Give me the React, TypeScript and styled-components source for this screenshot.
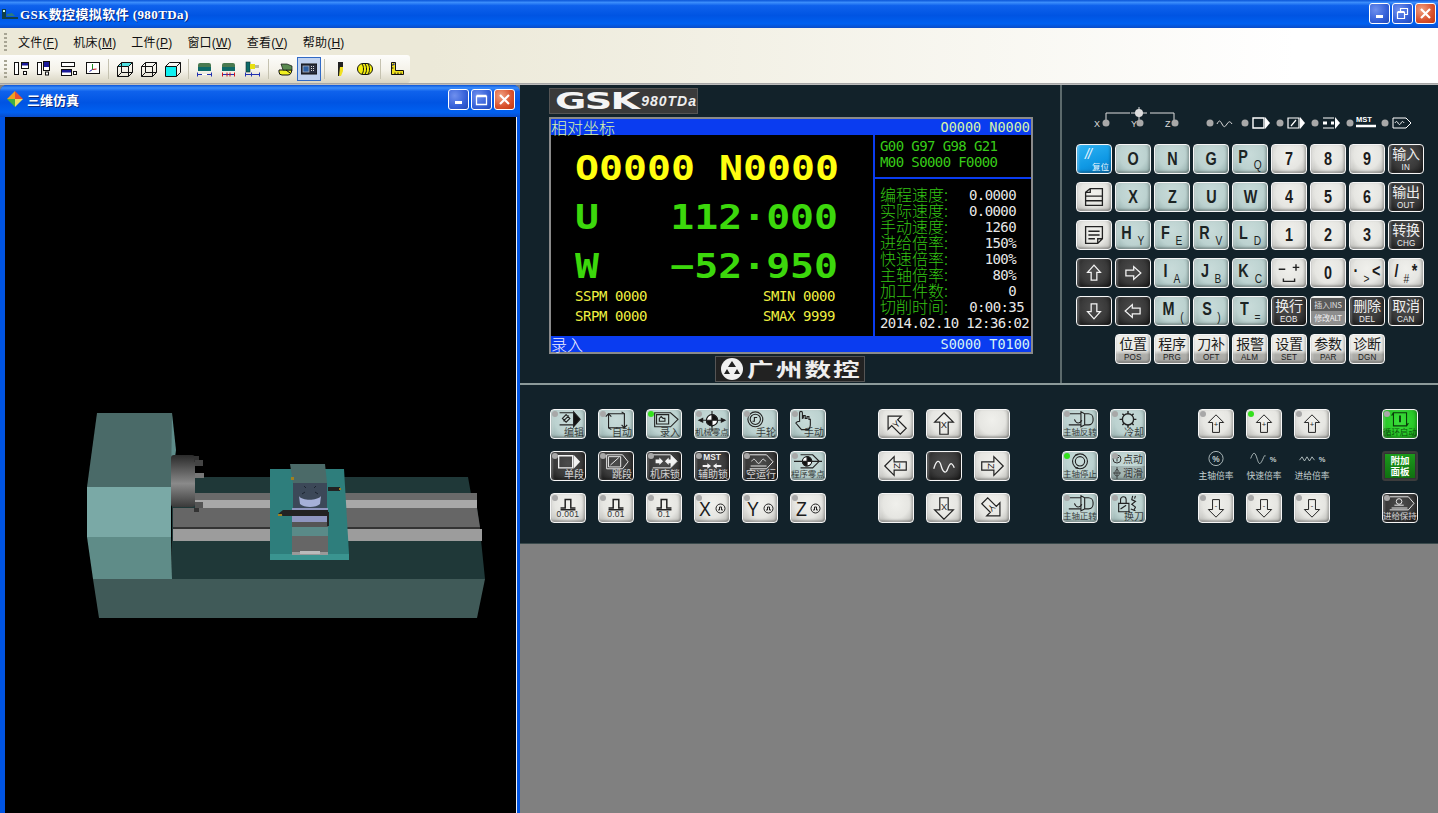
import React from 'react';
import styled, { createGlobalStyle, css } from 'styled-components';

const CJK = '"Liberation Sans", "Noto Sans CJK SC", sans-serif';
const MONO = '"DejaVu Sans Mono", "Noto Sans CJK SC", monospace';

const Global = createGlobalStyle`
  html, body { margin: 0; padding: 0; background: #808080; overflow: hidden; }
  * { box-sizing: border-box; }
`;

const Page = styled.div`
  width: 1438px; height: 813px; display: flex; flex-direction: column; overflow: hidden;
  font-family: ${CJK}; background: #808080;
`;

const xpBar = css`
  background: linear-gradient(180deg, #0a55d8 0%, #3b8dfb 9%, #0f62ec 20%, #0054e3 55%, #0060f0 85%, #0a4cc8 100%);
`;

const AppTitle = styled.div`
  ${xpBar}; height: 28px; display: flex; align-items: center; padding: 0 2px 2px 2px; color: #fff;
`;
const AppTitleText = styled.span`
  margin-left: 2px; flex: 1; font: bold 13px "Liberation Serif", "Noto Sans CJK SC", serif;
  letter-spacing: 0.4px; text-shadow: 1px 1px 0 #0a2a80;
`;
const CaptionButtons = styled.div`display: flex; gap: 2px; align-items: center;`;
const CapBtn = styled.div<{ $close?: boolean; $s?: number }>`
  width: 21px; height: 21px; border: 1px solid #fff; border-radius: 3px;
  background: ${p => p.$close
    ? 'radial-gradient(circle at 30% 30%, #f0a080, #d8502c 60%, #c03810)'
    : 'radial-gradient(circle at 30% 30%, #6f90ee, #3560d8 60%, #2048b8)'};
  display: flex; align-items: center; justify-content: center;
`;

const Rebar = styled.div`
  background: linear-gradient(90deg, #ece9d8 0%, #ece9d8 30%, #ffffff 90%);
`;
const MenuBar = styled.div`
  height: 27px; display: flex; align-items: center; padding-left: 3.5px;
`;
const Grip = styled.div`
  width: 3px; height: 18px; margin-right: 4px;
  background: repeating-linear-gradient(180deg, #a8a594 0 2px, transparent 2px 4px);
`;
const MenuItem = styled.span`
  padding: 0 7.5px; font-size: 12px; color: #111; white-space: nowrap; letter-spacing: .2px;
  u { text-underline-offset: 1px; }
`;
const ToolRow = styled.div`height: 28px; display: flex;`;
const ToolBar = styled.div`
  width: 410px; height: 28px; display: flex; align-items: center; padding-left: 4px;
  background: linear-gradient(180deg, #fdfdfb 0%, #f4f2e9 55%, #d9d5c2 100%);
  border-radius: 0 3px 3px 0;
`;
const ToolGrip = styled(Grip)`margin-right: 2px;`;
const ToolBtn = styled.div<{ $on?: boolean }>`
  width: 24px; height: 24px; display: flex; align-items: center; justify-content: center;
  ${p => p.$on && 'background: #c1d2ee; border: 1px solid #316ac5;'}
`;
const ToolSep = styled.div`
  width: 1px; height: 20px; margin: 0 4px 0 3px; background: #c5c2b0;
`;
const Strip = styled.div`height: 2px; background: linear-gradient(#9a9a9a, #c8c8c8);`;

const Work = styled.div`flex: 1; display: flex; min-height: 0;`;

const SimWindow = styled.div`
  width: 520px; display: flex; flex-direction: column; background: #0054e3;
  border-radius: 7px 7px 0 0; overflow: hidden; padding: 0 3px 0 5px;
`;
const SimTitle = styled.div`
  ${xpBar}; height: 32px; margin: 0 -3px 0 -5px; display: flex; align-items: center;
  padding: 0 5px 4px 7px; color: #fff;
`;
const SimTitleText = styled.span`
  margin-left: 4px; flex: 1; font-size: 13px; font-weight: 700; text-shadow: 1px 1px 0 #0a2a80;
`;
const SimView = styled.div`
  flex: 1; background: #000; border-right: 1px solid #f0f0f0; min-height: 0;
  svg { display: block; width: 100%; height: 100%; }
`;

const Controller = styled.div`flex: 1; display: flex; flex-direction: column; background: #808080;`;
const UpperPanel = styled.div`
  height: 300px; display: flex; background: #12222a; border-bottom: 2px solid #8c9a9a;
`;
const ScreenSide = styled.div`
  width: 542px; padding: 3px 0 0 29px; border-right: 2px solid #5c6a6c;
  display: flex; flex-direction: column;
`;
const BrandTag = styled.div`
  width: 149px; height: 26px; background: #3a3a3a; border: 1px solid #555; display: flex;
  align-items: center; padding-left: 5px; overflow: hidden;
`;
const BrandName = styled.span`
  color: #f4f4f4; font: 900 23px "DejaVu Sans", sans-serif; display: inline-block; width: 89px;
  transform: scaleX(1.66); transform-origin: left center; letter-spacing: -1px;
`;
const BrandModel = styled.span`
  color: #eee; font: italic 700 14px "Liberation Sans", sans-serif; letter-spacing: 1px; margin-left: 1px;
`;
const Bezel = styled.div`
  width: 484px; height: 237px; margin-top: 3px; border: 2px solid #8a8a8a; background: #000;
  display: flex; flex-direction: column; font-family: ${MONO};
`;
const Band = styled.div`
  height: 16px; background: #0a3cf0; display: flex; justify-content: space-between; align-items: center;
  padding: 0 1px 0 0; font-size: 13.5px; line-height: 16px;
`;
const BandLabel = styled.span<{ $c: string }>`
  color: ${p => p.$c}; font-size: 16px; font-family: "Noto Sans CJK SC", sans-serif; font-weight: 300; line-height: 16px;
`;
const BandValue = styled.span<{ $c: string }>`color: ${p => p.$c};`;
const ScreenBody = styled.div`flex: 1; display: flex; min-height: 0;`;
const PosPane = styled.div`
  width: 322px; padding: 15px 0 0 24px; display: flex; flex-direction: column; gap: 13px;
`;
const BigRow = styled.div<{ $c: string }>`
  width: 224.5px; height: 36px; display: flex; justify-content: space-between; align-items: center;
  color: ${p => p.$c}; font: bold 34px/36px ${MONO}; white-space: pre;
  transform: scaleX(1.172); transform-origin: left center;
`;
const SmallGrid = styled.div`
  width: 260px; display: grid; grid-template-columns: 1fr auto; grid-auto-rows: 20px; margin-top: -11px;
  color: #f0f040; font-size: 14px; line-height: 20px; letter-spacing: -0.43px; white-space: pre;
`;
const InfoPane = styled.div`
  flex: 1; border-left: 2px solid #0a3cf0; display: flex; flex-direction: column;
`;
const ModalBlock = styled.div`
  height: 44px; padding: 3px 0 0 5px; border-bottom: 2px solid #0a3cf0; color: #38cc18;
  font-size: 14px; line-height: 16px; letter-spacing: -0.6px; white-space: pre;
`;
const InfoList = styled.div`padding: 8px 0 0 5px;`;
const InfoRow = styled.div<{ $wide?: boolean }>`
  height: 16px; display: flex; justify-content: space-between; align-items: center;
  width: ${p => (p.$wide ? 144 : 136)}px; white-space: pre;
`;
const InfoLabel = styled.span`
  color: #34c414; font: 300 16px/16px "Noto Sans CJK SC", sans-serif; margin-bottom: 2px;
`;
const InfoValue = styled.span`color: #e8e8e8; font-size: 14px; letter-spacing: -0.6px;`;
const DateLine = styled.div`
  height: 16px; color: #e8e8e8; font-size: 14px; line-height: 16px; letter-spacing: -0.58px; white-space: pre;
`;
const MakerTag = styled.div`
  width: 150px; height: 26px; margin: 2px 0 0 166px; background: #222; border: 1px solid #555;
  display: flex; align-items: center; padding-left: 4px; gap: 3px; overflow: hidden;
`;
const MakerName = styled.span`
  color: #eee; font: 700 19px "Noto Sans CJK SC", sans-serif; letter-spacing: 1.5px; line-height: 24px;
  white-space: nowrap; display: inline-block; transform: scaleX(1.4); transform-origin: left center;
`;

const KeySide = styled.div`flex: 1; padding-left: 14px; display: flex; flex-direction: column;`;
const Indicators = styled.div`
  height: 59px; padding: 0 0 13px 14px; display: flex; align-items: flex-end;
`;
const IndicatorSpace = styled.div`width: 25px;`;
const KeyGrid = styled.div`
  display: grid; grid-template-columns: repeat(9, 36px); grid-auto-rows: 30px; column-gap: 3px; row-gap: 8px;
`;

type Tone = 'teal' | 'white' | 'dark' | 'blue' | 'silver' | 'green';
const tones: Record<Tone, string> = {
  teal: 'background: radial-gradient(ellipse at 50% 35%, #c8dbd9 0%, #bcd2d0 55%, #8faaa8 100%); color: #1c2424;',
  white: 'background: radial-gradient(ellipse at 50% 35%, #f0f0ec 0%, #e6e6e2 55%, #b4b4b0 100%); color: #1c1c1c;',
  dark: 'background: radial-gradient(ellipse at 50% 40%, #4c4c4c 0%, #3a3a3a 55%, #161616 100%); color: #eee;',
  blue: 'background: linear-gradient(160deg, #2fb4f4 0%, #0f98e4 60%, #0a78c0 100%); color: #e8f6ff;',
  silver: 'background: linear-gradient(180deg, #f0f0ec 0%, #e8e8e4 55%, #aeaeaa 70%, #a8a8a4 100%); color: #1c1c1c;',
  green: 'background: radial-gradient(ellipse at 50% 40%, #3ce03c 0%, #28c828 60%, #189018 100%); color: #0a3a0a;',
};
const Key = styled.div<{ $t: Tone; $row?: boolean }>`
  position: relative; width: 36px; height: 30px; border: 1px solid #f6f6f6; border-radius: 4px;
  ${p => tones[p.$t]};
  box-shadow: inset 0 -2px 2px rgba(0,0,0,.22), inset 2px 0 2px rgba(255,255,255,.25), inset -2px 0 2px rgba(0,0,0,.12);
  display: grid; overflow: hidden;
  & > * { grid-area: 1 / 1; }
`;
const Blank = styled.div``;
const Face = styled.div`
  display: flex; align-items: center; justify-content: center; gap: 1px; height: 100%;
`;
const Letter = styled.span<{ $up?: boolean }>`
  font: 700 18px/1 "Liberation Sans", sans-serif; display: inline-block; transform: scaleX(.8);
  ${p => p.$up && 'align-self: flex-start; margin-top: 3px;'}
`;
const SubLetter = styled.span`
  align-self: flex-end; margin: 0 0 2px 3px; font: 400 12px/1 "Liberation Sans", sans-serif;
  transform: scaleX(.85);
`;
const Stack = styled.div`
  display: flex; flex-direction: column; align-items: center; justify-content: flex-start; height: 100%; padding-top: 1px;
`;
const StackMain = styled.span`font: 400 14px/15px "Noto Sans CJK SC", sans-serif; letter-spacing: -0.3px; white-space: nowrap;`;
const StackSub = styled.span`font: 400 9px/10px "Liberation Sans", sans-serif; margin-top: 1px; letter-spacing: .2px; transform: scaleX(.9);`;
const SplitTop = styled.div`
  height: 13px; width: 34px; font: 400 8px/13px "Noto Sans CJK SC", sans-serif; text-align: center; white-space: nowrap;
  background: #5a5a5a; color: #ddd; letter-spacing: -.3px;
`;
const SplitBottom = styled.div`
  height: 13px; width: 34px; font: 400 8px/13px "Noto Sans CJK SC", sans-serif; text-align: center; white-space: nowrap;
  background: #8e8e8e; color: #eee; letter-spacing: -.3px;
`;
const ResetTop = styled.span`
  align-self: start; justify-self: start; margin: 2px 0 0 8px; font: italic 14px/14px "Liberation Sans", sans-serif; letter-spacing: -1px;
`;
const ResetSub = styled.span`
  align-self: end; justify-self: end; margin: 0 2px 2px 0; font: 400 8.5px/10px "Noto Sans CJK SC", sans-serif;
`;

const LowerPanel = styled.div`
  height: 159px; background: #12222a; border-bottom: 1px solid #3a4a4c; padding: 24px 0 0 30px;
  display: flex; gap: 52px; align-items: flex-start;
`;
const Group = styled.div<{ $n: number }>`
  display: grid; grid-template-columns: repeat(${p => p.$n}, 36px); grid-auto-rows: 30px; gap: 12px;
`;
const Led = styled.i<{ $on?: boolean }>`
  position: absolute; left: 1px; top: 1px; width: 6px; height: 6px; border-radius: 50%;
  background: ${p => (p.$on ? '#33e01c' : '#a8a8a8')}; z-index: 1;
`;
const IconSvg = styled.svg`display: block; width: 34px; height: 28px;`;
const Caption = styled.span<{ $tiny?: boolean; $center?: boolean }>`
  align-self: end; justify-self: ${p => (p.$center ? 'center' : 'end')}; margin: 0 1px 1px 0;
  font: 400 ${p => (p.$tiny ? 8.5 : 10)}px/11px "Noto Sans CJK SC", sans-serif; white-space: nowrap;
  opacity: .85; letter-spacing: ${p => (p.$tiny ? '-0.1px' : '0')};
`;
const DeciCaption = styled.span`
  align-self: end; justify-self: center; margin-bottom: 3px; font: 400 8.5px/9px "Liberation Sans", sans-serif;
  letter-spacing: .3px; color: #333;
`;
const AxisFace = styled.div`display: flex; align-items: center; justify-content: center; gap: 2px; height: 100%;`;
const AxisLetter = styled.span`font: 400 21px/1 "Liberation Sans", sans-serif; transform: scaleX(.85); display: inline-block;`;
const SplitFace = styled.div`display: flex; flex-direction: column; height: 100%;`;
const SplitLine = styled.div<{ $dim?: boolean }>`
  flex: 1; display: flex; align-items: center; justify-content: flex-end; gap: 1px; padding-right: 2px;
  font: 400 10px/1 "Noto Sans CJK SC", sans-serif; color: #333;
  ${p => p.$dim && 'background: rgba(0,0,0,.14);'}
`;
const OverrideCell = styled.div`
  display: flex; flex-direction: column; align-items: center; justify-content: flex-start;
  width: 36px; color: #c4d0d0;
`;
const OverrideText = styled.span`
  font: 400 8.8px/11px "Noto Sans CJK SC", sans-serif; white-space: nowrap; margin-top: 4px;
`;
const AuxPanel = styled.div`
  width: 36px; height: 30px; background: #333; border: 2px solid #3c3c3c; border-radius: 3px;
  display: flex; align-items: center; justify-content: center;
`;
const AuxInner = styled.div`
  width: 30px; height: 24px; background: linear-gradient(#1c9a1c, #107010); color: #fff;
  font: 700 9.5px/10.5px "Noto Sans CJK SC", sans-serif; text-align: center; padding-top: 1px;
`;
const Spare = styled.div`flex: 1; background: #808080;`;

/* ---------- small drawings ---------- */
const Glyph = ({ w = 16, h = 16, vb, children }: { w?: number; h?: number; vb?: string; children: React.ReactNode }) => (
  <svg width={w} height={h} viewBox={vb ?? `0 0 ${w} ${h}`} fill="none" style={{ display: 'block' }}>{children}</svg>
);

const XpMin = () => <Glyph w={12} h={12}><rect x="2" y="8" width="7" height="3" fill="#fff" /></Glyph>;
const XpMax = () => <Glyph w={13} h={13}><path d="M1.500 3.500h10v8h-10zM1.500 2.500h10" stroke="#fff" strokeWidth="1.3" /></Glyph>;
const XpRestore = () => <Glyph w={13} h={13}><path d="M1.500 5.500h7v6h-7zM1.500 4.500h7M4.500 4V1.500h7v6H9" stroke="#fff" strokeWidth="1.2" /></Glyph>;
const XpClose = () => <Glyph w={13} h={13}><path d="M2 2l9 9M11 2l-9 9" stroke="#fff" strokeWidth="2.2" /></Glyph>;

const AppIcon = () => (
  <Glyph w={16} h={14}>
    <path d="M0 11h16v2H0z" fill="#12404a" />
    <path d="M0 3h4v8H0z" fill="#12404a" />
    <path d="M1 4h2v2H1z" fill="#cfe" />
    <path d="M5 8l5-1 3 3H5z" fill="#2a7a80" />
  </Glyph>
);
const SimIcon = () => (
  <Glyph w={16} h={16}>
    <path d="M8 0L0 8h8z" fill="#f0a020" />
    <path d="M8 0l8 8H8z" fill="#e85030" />
    <path d="M0 8l8 8V8z" fill="#40b040" />
    <path d="M16 8l-8 8V8z" fill="#e8e060" />
  </Glyph>
);

const k = '#111';
const toolIcons: Record<string, React.ReactNode> = {
  a: <>
    <rect x="1.5" y="1.5" width="4" height="12" fill="#fff" stroke={k} />
    <rect x="8.5" y="1.5" width="7" height="6" fill="#fff" stroke={k} /><rect x="9" y="2" width="6" height="2.5" fill="#1a1a9a" />
    <rect x="10.5" y="10.5" width="3" height="3" fill="#fff" stroke={k} />
  </>,
  b: <>
    <rect x="0.5" y="1.5" width="4" height="12" fill="#fff" stroke={k} />
    <rect x="6.5" y="0.5" width="6" height="9" fill="#fff" stroke={k} /><rect x="7" y="1" width="5" height="5" fill="#1a1a9a" />
    <rect x="8.5" y="11" width="3" height="3" fill="#fff" stroke={k} />
  </>,
  c: <>
    <rect x="0.5" y="1.5" width="13" height="4" fill="#fff" stroke={k} />
    <rect x="0.5" y="8.5" width="10" height="6" fill="#fff" stroke={k} /><rect x="1" y="9" width="9" height="2.5" fill="#1a1a9a" />
    <rect x="12.5" y="10.5" width="3" height="3" fill="#fff" stroke={k} />
  </>,
  d: <>
    <rect x="1.5" y="1.5" width="13" height="11" fill="#fff" stroke={k} />
    <path d="M7.500 3v5.500" stroke="#1a8a1a" /><path d="M7.500 8.500l4-.5" stroke="#c01010" /><path d="M7.500 8.500l-3 2" stroke="#1a1a9a" />
  </>,
  e: <>
    <path d="M.5 5.500l4-4h11l-4 4z" fill="#4fe0e0" />
    <path d="M.5 5.500h11v10H.5zM.5 5.500l4-4h11v10l-4 4M4.500 1.500v10h11M4.500 11.500l-4 4M11.500 5.500l4-4" stroke={k} />
  </>,
  f: <path d="M.5 5.500h11v10H.5zM.5 5.500l4-4h11v10l-4 4M4.500 1.500v10h11M4.500 11.500l-4 4M11.500 5.500l4-4" stroke={k} />,
  g: <>
    <rect x=".5" y="5.5" width="11" height="10" fill="#10f0f0" />
    <path d="M.5 5.500h11v10H.5zM.5 5.500l4-4h11v10l-4 4M11.500 5.500l4-4" stroke={k} />
  </>,
  h: <>
    <path d="M1 4a2 2 0 012-2h9a2 2 0 012 2v2H1z" fill="#4a7a50" /><rect x="1" y="6" width="13" height="4" fill="#0e6a68" />
    <path d="M0 13.500h15M0.500 11.500v4M14.500 11.500v4" stroke="#2030b0" />
    <path d="M5 13.500h5" stroke="#fff" />
  </>,
  i: <>
    <path d="M1 4a2 2 0 012-2h9a2 2 0 012 2v2H1z" fill="#4a7a50" /><rect x="1" y="6" width="13" height="4" fill="#0e6a68" />
    <path d="M1 13.500h13" stroke="#2030b0" /><path d="M1.500 11.500v4M6 11.500v4M9 11.500v4M13.500 11.500v4" stroke="#d01020" />
  </>,
  j: <>
    <rect x="1" y="1" width="4" height="10" fill="#0e6a68" stroke="#103030" strokeWidth=".6" />
    <rect x="5" y="3" width="5" height="5" fill="#e8e010" /><rect x="10" y="4" width="4" height="3" fill="#b8b8a0" />
    <path d="M0 13.500h15M0.500 11.500v4M6.500 11.500v4M14.500 11.500v4" stroke="#2030b0" />
  </>,
  l: <>
    <path d="M2 9h13l-1 3a3 3 0 01-3 2H5a3 3 0 01-3-3z" fill="#f0f020" stroke={k} />
    <path d="M4 3h6l5 2v4H6z" fill="#5a8a50" stroke={k} strokeWidth=".7" />
    <path d="M9 9l4 3" stroke={k} />
  </>,
  n: <>
    <rect x="0" y="3" width="16" height="10" fill="#2a3040" stroke={k} />
    <rect x="2" y="5" width="6" height="6" fill="#3060a0" stroke="#ccc" strokeWidth=".6" />
    <path d="M10 5.500h4M10 7.500h4M10 9.500h4" stroke="#ddd" strokeDasharray="1 1" />
  </>,
  o: <>
    <path d="M5 1h5v6l-3 8H5z" fill="#222" /><path d="M7 6h3v4l-2 5H6z" fill="#f0e020" />
  </>,
  p: <>
    <rect x="0.5" y="2.5" width="15" height="11" rx="5.5" fill="#f4ee10" stroke={k} />
    <path d="M5 3c2 2 2 8 0 10M8 3c2 2 2 8 0 10M11 3c2 2 2 8 0 10" stroke={k} />
  </>,
  q: <>
    <path d="M2.500 1.500h4v8h8v4h-12z" fill="#f0e020" stroke={k} />
    <path d="M2.500 4h2M2.500 7h2M6 11.500v2M9 11.500v2M12 11.500v2" stroke={k} />
    <rect x="4" y="2.5" width="1.5" height="1.5" fill="#2030b0" />
  </>,
};
const Tool = ({ n, on }: { n: string; on?: boolean }) => (
  <ToolBtn $on={on}><Glyph w={16} h={16}>{toolIcons[n]}</Glyph></ToolBtn>
);

const Lathe = () => (
  <svg viewBox="5 117 511 696" preserveAspectRatio="none">
    <defs>
      <linearGradient id="chuck" x1="0" y1="0" x2="0" y2="1">
        <stop offset="0" stopColor="#2a2a2a" /><stop offset=".55" stopColor="#8a8a8a" /><stop offset="1" stopColor="#3a3a3a" />
      </linearGradient>
    </defs>
    <polygon points="172,477 468,477 471,494 477,508 480,530 485,579 172,579" fill="#1f3838" />
    <polygon points="93,579 485,579 477,618 99,618" fill="#405a58" />
    <polygon points="172,413 176,450 171,487 171,413" fill="#5e8c8a" />
    <polygon points="97,413 172,413 171,487 87,487" fill="#4a6a68" />
    <polygon points="87,487 171,487 171,537 87,537" fill="#7aa9a6" />
    <polygon points="87,537 171,537 172,579 93,579" fill="#5f8c88" />
    <rect x="171" y="493" width="306" height="7" fill="#6a6a6a" />
    <rect x="195" y="500" width="282" height="8" fill="#a8a8a8" />
    <polygon points="173,508 477,508 480,527 173,527" fill="#666" />
    <rect x="173" y="527" width="307" height="2" fill="#333" />
    <rect x="173" y="529" width="309" height="12" fill="#9c9c9c" />
    <rect x="171" y="455" width="24" height="52" rx="3" fill="url(#chuck)" />
    <rect x="194" y="456" width="5" height="6" fill="#333" /><rect x="195" y="460" width="8" height="6" fill="#444" />
    <rect x="195" y="473" width="9" height="5" fill="#777" />
    <rect x="195" y="502" width="8" height="6" fill="#555" /><rect x="194" y="508" width="5" height="4" fill="#333" />
    <polygon points="270,469 344,469 349,554 270,554" fill="#2e7e7c" />
    <rect x="270" y="554" width="79" height="6" fill="#3a9490" />
    <polygon points="290,464 325,464 327,483 293,483" fill="#4b6a68" />
    <rect x="293" y="483" width="34" height="25" fill="#3c4858" />
    <path d="M299 496c3 5 18 5 22 0l-1 8c-4 4-16 4-20 0z" fill="#a6b0d8" />
    <path d="M304 486l2 2M316 486l-2 2M302 494l3-2M318 494l-3-2" stroke="#1c2430" strokeWidth="1" />
    <rect x="292" y="508" width="36" height="14" fill="#8f96c0" />
    <rect x="292" y="522" width="36" height="5" fill="#555" />
    <rect x="292" y="527" width="36" height="9" fill="#5a8a88" />
    <rect x="292" y="536" width="36" height="18" fill="#666" />
    <rect x="292" y="552" width="36" height="3" fill="#999" /><rect x="300" y="551" width="20" height="3" fill="#bbb" />
    <polygon points="278,514 283,510 328,510 328,516 283,516" fill="#222" />
    <rect x="278" y="514" width="4" height="2" fill="#a08020" />
    <rect x="328" y="487" width="12" height="4" fill="#222" /><rect x="339" y="488" width="2" height="2" fill="#a08020" />
    <rect x="291" y="477" width="3" height="3" fill="#a08020" />
    <rect x="327" y="512" width="2" height="14" fill="#222" />
  </svg>
);

const Logo = () => (
  <Glyph w={24} h={24}>
    <circle cx="12" cy="12" r="11" fill="#f0f0f0" />
    <path d="M12 4l4 6H8zM7 12l-3 5h6zM17 12l-3 5h6z" fill="#222" />
  </Glyph>
);

const AxisLeds = () => (
  <Glyph w={90} h={24}>
    <path d="M16 13V6h24M60 6h24v7" stroke="#ddd" />
    <circle cx="49" cy="6" r="4" fill="#ddd" /><path d="M41 6h16M49 -1v14" stroke="#ddd" />
    <text x="4" y="20" fill="#ddd" fontSize="9" fontFamily="Liberation Sans">X</text>
    <circle cx="16" cy="16" r="3.5" fill="#a8a8a8" />
    <text x="41" y="20" fill="#ddd" fontSize="9" fontFamily="Liberation Sans">Y</text>
    <circle cx="50" cy="16" r="3.5" fill="#a8a8a8" />
    <text x="75" y="20" fill="#ddd" fontSize="9" fontFamily="Liberation Sans">Z</text>
    <circle cx="85" cy="16" r="3.5" fill="#a8a8a8" />
  </Glyph>
);
const head = 'M13 3h13l5 5-5 5H13z';
const indicatorIcons: React.ReactNode[] = [
  <path key="0" d="M12 9c2-4 3-4 5 0s3 3 5 0 3-3 5 0" stroke="#ddd" />,
  <g key="1"><path d="M13 3h11v10H13z" stroke="#fff" strokeWidth="1.4" /><path d="M25 2l5 6-5 6z" fill="#fff" /></g>,
  <g key="2"><path d="M13 3h11v10H13zM16 11l5-6" stroke="#fff" strokeWidth="1.2" /><path d="M25 2l5 6-5 6z" fill="#fff" /></g>,
  <g key="3"><path d="M13 3h11M13 13h11" stroke="#fff" /><path d="M13 8h4M21 8h3" stroke="#fff" strokeWidth="3" /><path d="M25 2l5 6-5 6z" fill="#fff" /></g>,
  <g key="4"><text x="11" y="7" fill="#fff" fontSize="7.5" fontFamily="Liberation Sans" fontWeight="700">MST</text><path d="M11 11h20" stroke="#fff" strokeWidth="2.5" /></g>,
  <g key="5"><path d={head} stroke="#fff" /><path d="M15 8c1-2 2-2 3 0s2 2 3 0 2-2 3 0" stroke="#fff" /></g>,
];
const IndicatorLed = ({ i }: { i: number }) => (
  <Glyph w={35} h={16}>
    <circle cx="5" cy="8" r="3.5" fill="#a8a8a8" />
    {indicatorIcons[i]}
  </Glyph>
);

const BigArrow = ({ r = 0, sign, size = 1, c = '#222' }: { r?: number; sign?: string; size?: number; c?: string }) => (
  <IconSvg viewBox="0 0 36 30">
    <g transform={`rotate(${r} 18 15) translate(18 15) scale(${size}) translate(-18 -15)`}>
      <path d="M18 3l10 10h-5.500v13h-9V13H8z" fill="none" stroke={c} strokeWidth="1.3" />
      {sign && <text x="18" y="19" textAnchor="middle" fill={c} fontSize="10" fontFamily="Liberation Sans">{sign}</text>}
    </g>
  </IconSvg>
);
const Ic = ({ children }: { children: React.ReactNode }) => (
  <IconSvg viewBox="0 0 36 30" fill="none" stroke="#222" strokeWidth="1.2">{children}</IconSvg>
);
const QuarterBall = ({ cx, cy, r }: { cx: number; cy: number; r: number }) => (
  <g>
    <circle cx={cx} cy={cy} r={r} fill="#fff" stroke="#111" />
    <path d={`M${cx} ${cy}V${cy - r}A${r} ${r} 0 0 1 ${cx + r} ${cy}zM${cx} ${cy}V${cy + r}A${r} ${r} 0 0 1 ${cx - r} ${cy}z`} fill="#111" />
  </g>
);
const Pulse = () => <Ic><path d="M10 15h5V6h6v9h5M10 17h16" strokeWidth="1.6" /></Ic>;
const PulseRing = () => (
  <Glyph w={11} h={11}>
    <circle cx="5.500" cy="5.500" r="4.500" stroke="#222" />
    <path d="M3 7h1.500V4h2v3H8" stroke="#222" />
  </Glyph>
);
const Spindle = () => (
  <Ic>
    <path d="M6 4h13v12H6M19 2l4 2v12l-4 2zM23 4h4a5 5 0 015 5v2a5 5 0 01-5 5h-4" />
    <path d="M12 10c2 5 6 5 8 1" />
  </Ic>
);

const DocIcon = ({ fold }: { fold?: boolean }) => (
  <Ic>
    {fold
      ? <path d="M9 6h18v13l-5 5H9zM27 19h-5v5M12 11h12M12 15h12M12 19h7" strokeWidth="1.4" />
      : <path d="M14 6h13v18H9V10h5zM9 10l5-4M9 14h18M9 19h18" strokeWidth="1.4" />}
  </Ic>
);
const ThickArrow = ({ r }: { r: number }) => (
  <IconSvg viewBox="0 0 36 30">
    <g transform={`rotate(${r} 18 15) translate(18 15) scale(.76) translate(-18 -15)`}>
      <path d="M18 4l9 10h-5v11h-8V14H9z" fill="none" stroke="#f4f4f4" strokeWidth="1.8" />
    </g>
  </IconSvg>
);

const Ltr = ({ m, s }: { m: string; s?: string }) => (
  <Key $t="teal"><Face><Letter $up={!!s}>{m}</Letter>{s && <SubLetter>{s}</SubLetter>}</Face></Key>
);
const Num = ({ m }: { m: string }) => <Key $t="white"><Face><Letter>{m}</Letter></Face></Key>;
const Fn = ({ m, s }: { m: string; s: string }) => (
  <Key $t="dark"><Stack><StackMain>{m}</StackMain><StackSub>{s}</StackSub></Stack></Key>
);
const Page6 = ({ m, s }: { m: string; s: string }) => (
  <Key $t="silver"><Stack><StackMain>{m}</StackMain><StackSub>{s}</StackSub></Stack></Key>
);

const Mode = ({ t, cap, tiny, on, children }: { t: Tone; cap?: string; tiny?: boolean; on?: boolean; children?: React.ReactNode }) => (
  <Key $t={t}>
    <Led $on={on} />
    {children}
    {cap && <Caption $tiny={tiny}>{cap}</Caption>}
  </Key>
);

const W = '#f2f2f2';

export default function App() {
  return (
    <Page>
      <Global />
      <AppTitle>
        <AppIcon />
        <AppTitleText>GSK数控模拟软件 (980TDa)</AppTitleText>
        <CaptionButtons>
          <CapBtn><XpMin /></CapBtn>
          <CapBtn><XpRestore /></CapBtn>
          <CapBtn $close><XpClose /></CapBtn>
        </CaptionButtons>
      </AppTitle>
      <Rebar>
        <MenuBar>
          <Grip />
          <MenuItem>文件(<u>F</u>)</MenuItem>
          <MenuItem>机床(<u>M</u>)</MenuItem>
          <MenuItem>工件(<u>P</u>)</MenuItem>
          <MenuItem>窗口(<u>W</u>)</MenuItem>
          <MenuItem>查看(<u>V</u>)</MenuItem>
          <MenuItem>帮助(<u>H</u>)</MenuItem>
        </MenuBar>
        <ToolRow>
          <ToolBar>
            <ToolGrip />
            <Tool n="a" /><Tool n="b" /><Tool n="c" /><Tool n="d" />
            <ToolSep />
            <Tool n="e" /><Tool n="f" /><Tool n="g" />
            <ToolSep />
            <Tool n="h" /><Tool n="i" /><Tool n="j" />
            <ToolSep />
            <Tool n="l" /><Tool n="n" on />
            <ToolSep />
            <Tool n="o" /><Tool n="p" />
            <ToolSep />
            <Tool n="q" />
          </ToolBar>
        </ToolRow>
      </Rebar>
      <Strip />
      <Work>
        <SimWindow>
          <SimTitle>
            <SimIcon />
            <SimTitleText>三维仿真</SimTitleText>
            <CaptionButtons>
              <CapBtn><XpMin /></CapBtn>
              <CapBtn><XpMax /></CapBtn>
              <CapBtn $close><XpClose /></CapBtn>
            </CaptionButtons>
          </SimTitle>
          <SimView><Lathe /></SimView>
        </SimWindow>

        <Controller>
          <UpperPanel>
            <ScreenSide>
              <BrandTag>
                <BrandName>GSK</BrandName>
                <BrandModel>980TDa</BrandModel>
              </BrandTag>
              <Bezel>
                <Band>
                  <BandLabel $c="#d8f4a8">相对坐标</BandLabel>
                  <BandValue $c="#d8f4a8">O0000 N0000</BandValue>
                </Band>
                <ScreenBody>
                  <PosPane>
                    <BigRow $c="#ffff10"><span>O0000 N0000</span></BigRow>
                    <BigRow $c="#3cd80c"><span>U</span><span>112·000</span></BigRow>
                    <BigRow $c="#3cd80c"><span>W</span><span>−52·950</span></BigRow>
                    <SmallGrid>
                      <span>SSPM 0000</span><span>SMIN 0000</span>
                      <span>SRPM 0000</span><span>SMAX 9999</span>
                    </SmallGrid>
                  </PosPane>
                  <InfoPane>
                    <ModalBlock>
                      G00 G97 G98 G21{'\n'}M00 S0000 F0000
                    </ModalBlock>
                    <InfoList>
                      <InfoRow><InfoLabel>编程速度:</InfoLabel><InfoValue>0.0000</InfoValue></InfoRow>
                      <InfoRow><InfoLabel>实际速度:</InfoLabel><InfoValue>0.0000</InfoValue></InfoRow>
                      <InfoRow><InfoLabel>手动速度:</InfoLabel><InfoValue>1260</InfoValue></InfoRow>
                      <InfoRow><InfoLabel>进给倍率:</InfoLabel><InfoValue>150%</InfoValue></InfoRow>
                      <InfoRow><InfoLabel>快速倍率:</InfoLabel><InfoValue>100%</InfoValue></InfoRow>
                      <InfoRow><InfoLabel>主轴倍率:</InfoLabel><InfoValue>80%</InfoValue></InfoRow>
                      <InfoRow><InfoLabel>加工件数:</InfoLabel><InfoValue>0</InfoValue></InfoRow>
                      <InfoRow $wide><InfoLabel>切削时间:</InfoLabel><InfoValue>0:00:35</InfoValue></InfoRow>
                      <DateLine>2014.02.10 12:36:02</DateLine>
                    </InfoList>
                  </InfoPane>
                </ScreenBody>
                <Band>
                  <BandLabel $c="#f0f0ff">录入</BandLabel>
                  <BandValue $c="#d8f4f4">S0000 T0100</BandValue>
                </Band>
              </Bezel>
              <MakerTag>
                <Logo />
                <MakerName>广州数控</MakerName>
              </MakerTag>
            </ScreenSide>

            <KeySide>
              <Indicators>
                <AxisLeds />
                <IndicatorSpace />
                {[0, 1, 2, 3, 4, 5].map(i => <IndicatorLed key={i} i={i} />)}
              </Indicators>
              <KeyGrid>
                <Key $t="blue"><ResetTop>//</ResetTop><ResetSub>复位</ResetSub></Key>
                <Ltr m="O" /><Ltr m="N" /><Ltr m="G" /><Ltr m="P" s="Q" />
                <Num m="7" /><Num m="8" /><Num m="9" /><Fn m="输入" s="IN" />

                <Key $t="white"><DocIcon /></Key>
                <Ltr m="X" /><Ltr m="Z" /><Ltr m="U" /><Ltr m="W" />
                <Num m="4" /><Num m="5" /><Num m="6" /><Fn m="输出" s="OUT" />

                <Key $t="white"><DocIcon fold /></Key>
                <Ltr m="H" s="Y" /><Ltr m="F" s="E" /><Ltr m="R" s="V" /><Ltr m="L" s="D" />
                <Num m="1" /><Num m="2" /><Num m="3" /><Fn m="转换" s="CHG" />

                <Key $t="dark"><ThickArrow r={0} /></Key>
                <Key $t="dark"><ThickArrow r={90} /></Key>
                <Ltr m="I" s="A" /><Ltr m="J" s="B" /><Ltr m="K" s="C" />
                <Key $t="white"><Ic>
                  <path d="M7 11h7M22 9h7M25.500 5.500v7M12 21v3h12v-3" strokeWidth="1.5" />
                </Ic></Key>
                <Num m="0" />
                <Key $t="white"><Face><Letter $up>·</Letter><SubLetter>&gt;</SubLetter><Letter $up>&lt;</Letter></Face></Key>
                <Key $t="white"><Face><Letter $up>/</Letter><SubLetter>#</SubLetter><Letter $up>*</Letter></Face></Key>

                <Key $t="dark"><ThickArrow r={180} /></Key>
                <Key $t="dark"><ThickArrow r={270} /></Key>
                <Ltr m="M" s="(" /><Ltr m="S" s=")" /><Ltr m="T" s="=" />
                <Fn m="换行" s="EOB" />
                <Key $t="silver"><Stack><SplitTop>插入INS</SplitTop><SplitBottom>修改ALT</SplitBottom></Stack></Key>
                <Fn m="删除" s="DEL" />
                <Fn m="取消" s="CAN" />

                <Blank />
                <Page6 m="位置" s="POS" /><Page6 m="程序" s="PRG" /><Page6 m="刀补" s="OFT" /><Page6 m="报警" s="ALM" />
                <Page6 m="设置" s="SET" /><Page6 m="参数" s="PAR" /><Page6 m="诊断" s="DGN" />
              </KeyGrid>
            </KeySide>
          </UpperPanel>

          <LowerPanel>
            <Group $n={6}>
              <Mode t="teal" cap="编辑"><Ic><path d="M9 3h15M9 16h15" /><path d="M24 2l7 8-7 8z" fill="#111" /><path d="M16 5l4 4-4 4-4-4zM13 12l6-6" /></Ic></Mode>
              <Mode t="teal" cap="自动"><Ic><path d="M10 4h17v15H10z" /><path d="M10 4l-3 3M10 4l3 3M27 19l-3-3M27 19l3-3M27 4l-3-2M10 19l3 2" /></Ic></Mode>
              <Mode t="teal" cap="录入" on><Ic><path d="M8 3h17l8 7-8 8H8z" /><path d="M10 5h13v10H10z" /><path d="M13 12V9l2-2 2 2h2v3z" /></Ic></Mode>
              <Mode t="teal" cap="机械零点" tiny><Ic><path d="M4 11h28M18 1v22" /><path d="M4 11l4-2v4zM32 11l-4-2v4z" fill="#111" /><QuarterBall cx={18} cy={11} r={6} /></Ic></Mode>
              <Mode t="teal" cap="手轮"><Ic><circle cx="13" cy="10" r="8" /><circle cx="13" cy="10" r="5.500" /><path d="M10 12h2V8h3" /></Ic></Mode>
              <Mode t="teal" cap="手动"><Ic><path d="M9 12V3a1.500 1.500 0 013 0v6l1-.5V6h2v3h2V7h2v3h1.500v6c0 3-1 4-2 5H11l-6-7 1.500-1.500z" /></Ic></Mode>

              <Mode t="dark" cap="单段"><IconSvg viewBox="0 0 36 30"><path d="M8 4h15v13H8z" fill="none" stroke={W} strokeWidth="1.4" /><path d="M24 3l7 7.500-7 7.500z" fill={W} /></IconSvg></Mode>
              <Mode t="dark" cap="跳段"><IconSvg viewBox="0 0 36 30" fill="none" stroke={W}><path d="M8 3h17l6 7.500-6 7.500H8z" /><path d="M10 5h13v11H10zM12 14l9-8" /></IconSvg></Mode>
              <Mode t="dark" cap="机床锁"><IconSvg viewBox="0 0 36 30"><path d="M6 3h19l7 7-7 7H6" fill="none" stroke={W} /><path d="M9 8h4v-2l4 4-4 4v-2H9zM27 8h-4v-2l-4 4 4 4v-2h4z" fill={W} /><path d="M25 3l7 7-7 7z" fill={W} /></IconSvg></Mode>
              <Key $t="dark"><Led /><Caption>辅助锁</Caption>
                <IconSvg viewBox="0 0 36 30"><text x="18" y="9" textAnchor="middle" fill={W} fontSize="9" fontWeight="700" fontFamily="Liberation Sans">MST</text><path d="M8 14h5v-2l4 3-4 3v-2H8zM28 14h-5v-2l-4 3 4 3v-2h5z" fill={W} /></IconSvg>
              </Key>
              <Mode t="dark" cap="空运行"><IconSvg viewBox="0 0 36 30" fill="none" stroke={W}><path d="M7 3h18l7 7.500-7 7.500H7M7 3M8 15h17" /><path d="M9 10c2-3 3-3 5 0s3 3 5 0 3-3 5 0" /></IconSvg></Mode>
              <Mode t="teal" cap="程序零点" tiny><Ic><path d="M3 10h30M10 3h13l7 7-7 7H10" /><QuarterBall cx={17} cy={10} r={5} /></Ic></Mode>

              <Key $t="white"><Led /><Pulse /><DeciCaption>0.001</DeciCaption></Key>
              <Key $t="white"><Led /><Pulse /><DeciCaption>0.01</DeciCaption></Key>
              <Key $t="white"><Led /><Pulse /><DeciCaption>0.1</DeciCaption></Key>
              <Key $t="white"><Led /><AxisFace><AxisLetter>X</AxisLetter><PulseRing /></AxisFace></Key>
              <Key $t="white"><Led /><AxisFace><AxisLetter>Y</AxisLetter><PulseRing /></AxisFace></Key>
              <Key $t="white"><Led /><AxisFace><AxisLetter>Z</AxisLetter><PulseRing /></AxisFace></Key>
            </Group>

            <Group $n={3}>
              <Key $t="white"><BigArrow r={-45} sign="Y" /></Key>
              <Key $t="white"><BigArrow sign="X" /></Key>
              <Key $t="white" />
              <Key $t="white"><BigArrow r={-90} sign="Z" /></Key>
              <Key $t="dark"><IconSvg viewBox="0 0 36 30" fill="none" stroke={W} strokeWidth="1.4"><path d="M7 18c3-10 6-10 8-3s5 9 7 3 4-8 7-1" /></IconSvg></Key>
              <Key $t="white"><BigArrow r={90} sign="Z" /></Key>
              <Key $t="white" />
              <Key $t="white"><BigArrow r={180} sign="X" /></Key>
              <Key $t="white"><BigArrow r={135} sign="Y" /></Key>
            </Group>

            <Group $n={2}>
              <Mode t="teal" cap="主轴反转" tiny><Spindle /></Mode>
              <Mode t="teal" cap="冷却"><Ic><circle cx="18" cy="10" r="6" strokeWidth="1.5" /><path d="M18 1v3M18 16v3M9 10h3M24 10h3M12 4l2 2M24 4l-2 2M12 16l2-2M24 16l-2-2" strokeWidth="1.5" /></Ic></Mode>
              <Mode t="teal" cap="主轴停止" tiny on><Ic><circle cx="18" cy="10" r="8" /><circle cx="18" cy="10" r="5" /><path d="M13 3h3M13 17h3" /></Ic></Mode>
              <Key $t="teal">
                <Led />
                <SplitFace>
                  <SplitLine>
                    <Glyph w={10} h={10}><circle cx="5" cy="5" r="4" stroke="#333" /><path d="M3 3.500h4M5 3.500v4" stroke="#333" /></Glyph>点动
                  </SplitLine>
                  <SplitLine $dim>
                    <Glyph w={10} h={12}><path d="M5 0v12M1 6h8M5 2c-3 3-3 7 0 7s3-4 0-7z" stroke="#333" strokeWidth=".8" /></Glyph>润滑
                  </SplitLine>
                </SplitFace>
              </Key>
              <Mode t="teal" cap="主轴正转" tiny><Spindle /></Mode>
              <Mode t="teal" cap="换刀"><Ic><path d="M8 10h11v9H8zM10 10V6a3 3 0 016 0v4M10 16l6-4M23 2l-1 4 4 2-4 3 4 3-2 4M26 2l-1 3M21 16l5 2" /></Ic></Mode>
            </Group>

            <Group $n={3}>
              <Mode t="white"><BigArrow sign="+" size={.82} /></Mode>
              <Mode t="white" on><BigArrow sign="+" size={.82} /></Mode>
              <Mode t="white"><BigArrow sign="+" size={.82} /></Mode>
              <OverrideCell>
                <Glyph w={20} h={18}><circle cx="10" cy="9" r="8.500" stroke="#c4d0d0" /><text x="10" y="13" textAnchor="middle" fill="#c4d0d0" fontSize="10" fontWeight="700" fontFamily="Liberation Sans">%</text></Glyph>
                <OverrideText>主轴倍率</OverrideText>
              </OverrideCell>
              <OverrideCell>
                <Glyph w={34} h={18}><path d="M1 9c3-8 5-8 7-2s3 11 6 6 3-9 5-7" stroke="#c4d0d0" /><text x="24" y="13" fill="#c4d0d0" fontSize="9" fontWeight="700" fontFamily="Liberation Sans">%</text></Glyph>
                <OverrideText>快速倍率</OverrideText>
              </OverrideCell>
              <OverrideCell>
                <Glyph w={34} h={18}><path d="M2 11l3-4 3 5 3-5 3 5 3-5 3 4" stroke="#c4d0d0" /><text x="25" y="13" fill="#c4d0d0" fontSize="9" fontWeight="700" fontFamily="Liberation Sans">%</text></Glyph>
                <OverrideText>进给倍率</OverrideText>
              </OverrideCell>
              <Mode t="white"><BigArrow r={180} sign="-" size={.82} /></Mode>
              <Mode t="white"><BigArrow r={180} sign="-" size={.82} /></Mode>
              <Mode t="white"><BigArrow r={180} sign="-" size={.82} /></Mode>
            </Group>

            <Group $n={1}>
              <Mode t="green" cap="循环启动" tiny><Ic><path d="M11 3h14v14H11z" stroke="#0a3a0a" /><path d="M18 6v7" stroke="#0a3a0a" strokeWidth="2" /><path d="M11 3l-2 3M25 17l2-3" stroke="#0a3a0a" /></Ic></Mode>
              <AuxPanel><AuxInner>附加<br />面板</AuxInner></AuxPanel>
              <Mode t="dark" cap="进给保持" tiny><IconSvg viewBox="0 0 36 30" fill="none" stroke={W}><path d="M7 3h20l6 7-6 7H7" /><circle cx="17" cy="8" r="3" /><path d="M9 15h17M12 12h10" /></IconSvg></Mode>
            </Group>
          </LowerPanel>
          <Spare />
        </Controller>
      </Work>
    </Page>
  );
}
